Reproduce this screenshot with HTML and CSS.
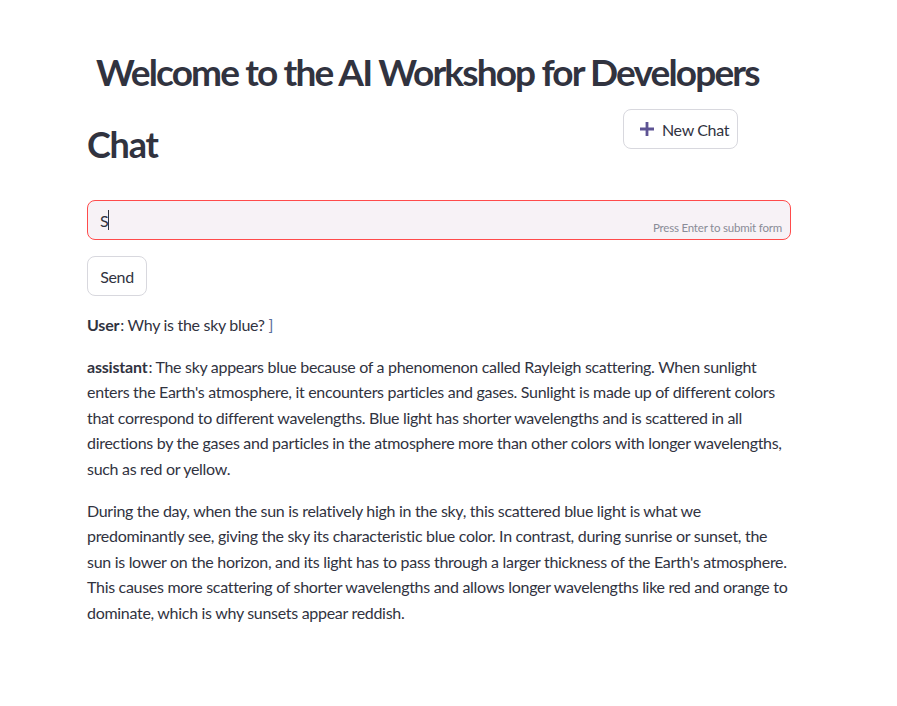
FILE: index.html
```html
<!DOCTYPE html>
<html lang="en">
<head>
<meta charset="utf-8">
<title>AI Workshop Chat</title>
<link rel="stylesheet" href="styles.css">
</head>
<body>
<main class="page">
  <h1 class="title">Welcome to the AI Workshop for Developers</h1>
  <div class="header-row">
    <h2 class="chat-title">Chat</h2>
    <button class="btn new-chat" type="button">
      <svg class="plus" width="16" height="16" viewBox="0 0 16 16" aria-hidden="true"><path d="M6.6 1h2.8v5.6H15v2.8H9.4V15H6.6V9.4H1V6.6h5.6z"/></svg>
      <span>New Chat</span>
    </button>
  </div>
  <form class="chat-form">
    <div class="input-box">
      <span class="input-text">S</span><span class="caret"></span>
      <span class="hint">Press Enter to submit form</span>
    </div>
    <button class="btn send" type="button">Send</button>
  </form>
  <div class="messages">
    <p class="msg"><strong>User</strong>: Why is the sky blue? <span class="stray">]</span></p>
    <p class="msg"><strong>assistant</strong>: The sky appears blue because of a phenomenon called Rayleigh scattering. When sunlight enters the Earth's atmosphere, it encounters particles and gases. Sunlight is made up of different colors that correspond to different wavelengths. Blue light has shorter wavelengths and is scattered in all directions by the gases and particles in the atmosphere more than other colors with longer wavelengths, such as red or yellow.</p>
    <p class="msg">During the day, when the sun is relatively high in the sky, this scattered blue light is what we predominantly see, giving the sky its characteristic blue color. In contrast, during sunrise or sunset, the sun is lower on the horizon, and its light has to pass through a larger thickness of the Earth's atmosphere. This causes more scattering of shorter wavelengths and allows longer wavelengths like red and orange to dominate, which is why sunsets appear reddish.</p>
  </div>
</main>
</body>
</html>
```
FILE: styles.css
```css
html, body {
  margin: 0;
  padding: 0;
  background: #ffffff;
}
body {
  font-family: Lato, "Noto Sans", sans-serif;
  color: #31333f;
  font-size: 16px;
  letter-spacing: -0.3px;
}
.page {
  width: 704px;
  padding: 0 0 40px 87px;
}
.title {
  margin: 48px 0 0 9px;
  font-size: 37px;
  line-height: 48px;
  font-weight: 700;
  letter-spacing: -1.85px;
  white-space: nowrap;
}
.header-row {
  display: flex;
  align-items: flex-start;
  margin-top: 13px;
}
.chat-title {
  flex: 0 0 536px;
  margin: 14px 0 0 0;
  font-size: 36px;
  line-height: 43px;
  font-weight: 700;
  letter-spacing: -1.2px;
}
.btn {
  font-family: inherit;
  font-size: 16px;
  letter-spacing: -0.35px;
  color: #31333f;
  background: #ffffff;
  border: 1px solid #d8d8de;
  border-radius: 8px;
  height: 40px;
  padding: 0 12px;
  display: inline-flex;
  align-items: center;
  gap: 7px;
}
.new-chat {
  width: 115px;
  padding: 0 0 0 15px;
}
.plus {
  fill: #5d5393;
  flex: none;
}
.chat-form {
  margin-top: 34px;
}
.input-box {
  position: relative;
  height: 40px;
  box-sizing: border-box;
  border: 1px solid #ff4b4b;
  border-radius: 8px;
  background: #f7f2f6;
  display: flex;
  align-items: center;
  padding-left: 12px;
}
.input-text {
  font-size: 16px;
}
.caret {
  display: inline-block;
  width: 1px;
  height: 20px;
  background: #31333f;
}
.hint {
  position: absolute;
  right: 8px;
  bottom: 5px;
  font-size: 11.5px;
  letter-spacing: -0.2px;
  color: #8a8c97;
}
.send {
  margin-top: 16px;
  width: 60px;
  justify-content: center;
}
.messages {
  margin-top: 16px;
}
.msg {
  margin: 0 0 16px 0;
  line-height: 25.6px;
}
.msg strong {
  font-weight: 700;
  letter-spacing: -0.2px;
  padding-right: 1px;
}
.stray {
  color: #5a6c9a;
}
```
